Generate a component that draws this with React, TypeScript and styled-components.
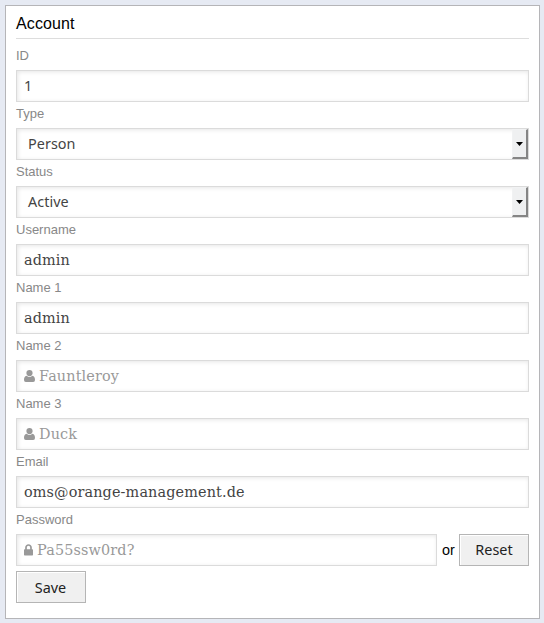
import React from 'react';
import styled, { createGlobalStyle } from 'styled-components';

const GlobalStyle = createGlobalStyle`
  * { box-sizing: border-box; }
  body {
    margin: 0;
    padding: 5px 4px 4px 5px;
    background: #e6eaf3;
    font-family: "Liberation Sans", Arial, sans-serif;
  }
`;

const Panel = styled.form`
  height: 614px;
  padding: 0 10px;
  border: 1px solid #b5b5b8;
  background: #fff;
`;

const Title = styled.h1`
  height: 33px;
  margin: 0 0 5px;
  border-bottom: 1px solid #ddd;
  color: #000;
  font-size: 16px;
  font-weight: 400;
  letter-spacing: 0.12px;
  line-height: 35px;
`;

const Label = styled.label`
  display: block;
  height: 26px;
  color: #888;
  font-size: 13px;
  line-height: 24px;
`;

const Control = styled.div<{ $serif?: boolean; $placeholder?: boolean; $select?: boolean }>`
  display: flex;
  align-items: center;
  flex: 1;
  height: 32px;
  padding-left: ${p => (p.$select ? 11 : 7)}px;
  border: 1px solid #dbdbdb;
  background: #fff;
  box-shadow: inset 1px 1px 4px rgba(0, 0, 0, 0.1);
  color: ${p => (p.$placeholder ? '#999' : '#444')};
  font-family: ${p => (p.$serif ? '"DejaVu Serif", serif' : '"Noto Sans", sans-serif')};
  font-size: 14.4px;
  letter-spacing: ${p => (p.$serif ? 0.14 : 0.05)}px;
  line-height: 30px;
`;

const DropButton = styled.span`
  display: flex;
  align-items: center;
  justify-content: center;
  width: 16px;
  height: 30px;
  margin-left: auto;
  border: solid;
  border-width: 1px 2px 2px 1px;
  border-color: #f1f2f3 #858585 #858585 #f1f2f3;
  background: #eff0f1;
`;

const Glyph = styled.svg`
  flex: none;
  height: 12px;
  margin-right: 4px;
  fill: #999;
`;

const Row = styled.div`
  display: flex;
  align-items: center;
`;

const Or = styled.span`
  width: 22px;
  padding-left: 5px;
  font-size: 14.4px;
`;

const Button = styled.button`
  width: 70px;
  height: 32px;
  padding: 0 0 2px;
  border: 1px solid #b5b5b5;
  background: #f0f0f0;
  box-shadow: inset 1px 1px 0 #fff;
  color: #222;
  font: 14.4px "Noto Sans", sans-serif;
`;

const SaveButton = styled(Button)`
  display: block;
  margin-top: 5px;
  padding: 0 1px 0 0;
`;

const UserIcon = () => (
  <Glyph width="11" viewBox="0 0 11 12">
    <circle cx="5.5" cy="3.1" r="3.1" />
    <path d="M2.700 5.700Q5.500 8.300 8.300 5.700C10.400 5.700 11 8 11 10Q11 12 9.200 12H1.800Q0 12 0 10C0 8 .6 5.700 2.700 5.700z" />
  </Glyph>
);

const LockIcon = () => (
  <Glyph width="9" viewBox="0 0 9 12">
    <path d="M2 6V3.500a2.500 2.500 0 0 1 5 0V6" fill="none" stroke="#999" strokeWidth="1.7" />
    <rect y="5.200" width="9" height="6.300" rx=".7" />
  </Glyph>
);

const Select = ({ value }: { value: string }) => (
  <Control $select>
    {value}
    <DropButton>
      <svg width="7" height="4" viewBox="0 0 7 4"><path d="M0 0h7L3.500 4z" /></svg>
    </DropButton>
  </Control>
);

const Field = ({ label, children }: { label: string; children: React.ReactNode }) => (
  <div>
    <Label>{label}</Label>
    <Row>{children}</Row>
  </div>
);

export default function App() {
  return (
    <>
      <GlobalStyle />
      <Panel>
        <Title>Account</Title>
        <Field label="ID"><Control>1</Control></Field>
        <Field label="Type"><Select value="Person" /></Field>
        <Field label="Status"><Select value="Active" /></Field>
        <Field label="Username"><Control $serif>admin</Control></Field>
        <Field label="Name 1"><Control $serif>admin</Control></Field>
        <Field label="Name 2"><Control $serif $placeholder><UserIcon />Fauntleroy</Control></Field>
        <Field label="Name 3"><Control $serif $placeholder><UserIcon />Duck</Control></Field>
        <Field label="Email"><Control $serif>oms@orange-management.de</Control></Field>
        <Field label="Password">
          <Control $serif $placeholder><LockIcon />Pa55ssw0rd?</Control>
          <Or>or</Or>
          <Button type="button">Reset</Button>
        </Field>
        <SaveButton type="button">Save</SaveButton>
      </Panel>
    </>
  );
}
